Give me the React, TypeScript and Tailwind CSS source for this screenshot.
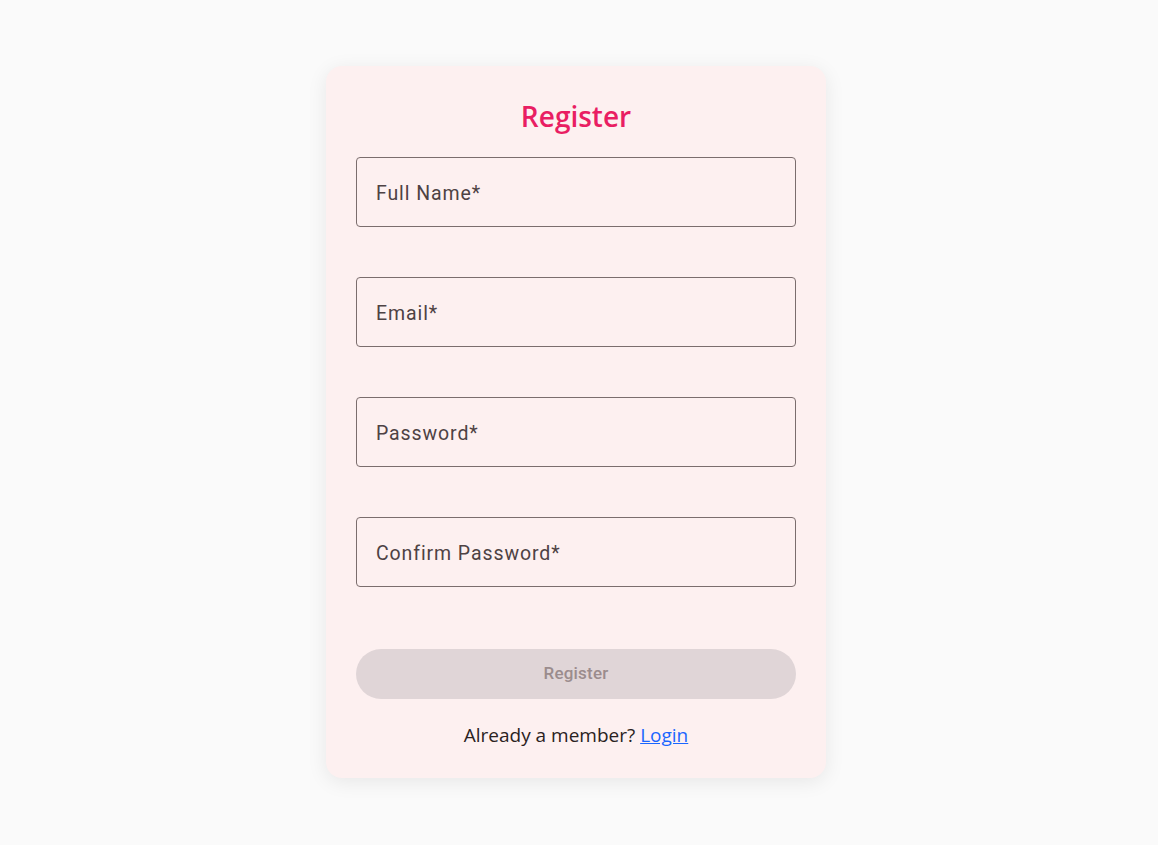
import { useState } from 'react'

export default function App() {
  const [form, setForm] = useState({ name: '', email: '', password: '', confirm: '' })

  const fields: { key: keyof typeof form; label: string; type: string }[] = [
    { key: 'name', label: 'Full Name*', type: 'text' },
    { key: 'email', label: 'Email*', type: 'email' },
    { key: 'password', label: 'Password*', type: 'password' },
    { key: 'confirm', label: 'Confirm Password*', type: 'password' },
  ]

  const ready = Object.values(form).every(v => v.trim() !== '')

  return (
    <div className="min-h-screen w-full bg-[#fafafa] flex justify-center pt-[66px] pr-[6px]">
      <div className="w-[500px] h-[712px] bg-[#fdf0f0] rounded-2xl shadow-[0_4px_20px_rgba(0,0,0,0.08)] px-[30px] pt-[30px] flex flex-col">
        <h1 className="text-center text-[28px] leading-[40px] font-semibold text-[#e91e63] font-['Open_Sans',sans-serif]">
          Register
        </h1>

        <div className="mt-[21px] flex flex-col gap-[50px]">
          {fields.map(f => (
            <input
              key={f.key}
              type={f.type}
              placeholder={f.label}
              value={form[f.key]}
              onChange={e => setForm(prev => ({ ...prev, [f.key]: e.target.value }))}
              className="w-full h-[70px] border border-[#7b6d6d] rounded bg-transparent px-[19px] pt-[3px] text-[19.5px] tracking-[0.9px] text-[#4a3f40] placeholder:text-[#4e4244] font-['Roboto',sans-serif] outline-none"
            />
          ))}
        </div>

        <button
          type="button"
          disabled={!ready}
          className="mt-[62px] w-full h-[50px] rounded-full bg-[#e0d5d7] text-[#9b8c8d] text-[17px] tracking-[0.2px] font-medium font-['Roboto',sans-serif]"
        >
          Register
        </button>

        <p className="mt-[22px] text-center text-[19px] leading-[28px] text-[#2a2222] font-['Open_Sans',sans-serif]">
          Already a member?{' '}
          <a href="#" className="text-[#1a66ff] underline">
            Login
          </a>
        </p>
      </div>
    </div>
  )
}
